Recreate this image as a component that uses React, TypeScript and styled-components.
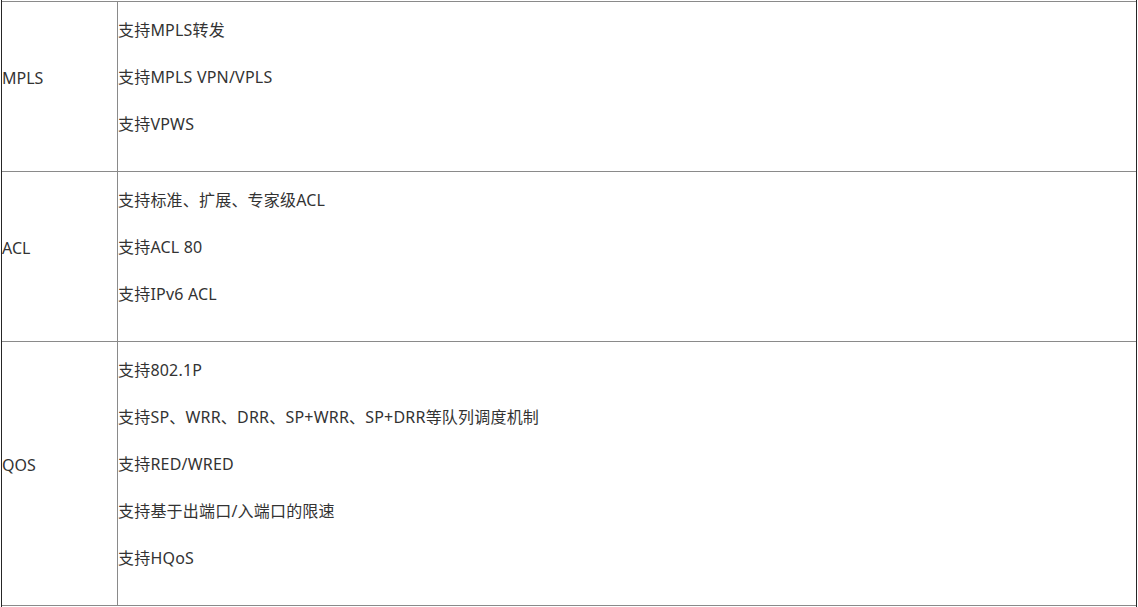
import React from "react";
import styled, { createGlobalStyle } from "styled-components";

const Global = createGlobalStyle`
  html, body { margin: 0; padding: 0; background: #fff; }
  body { font-family: "Noto Sans", "Noto Sans CJK SC", sans-serif; }
`;

const Frame = styled.div`
  box-sizing: border-box;
  margin-left: 1px;
  width: 1136px;
  height: 607px;
  padding-top: 1px;
  border-left: 1px solid #262626;
  border-right: 1px solid #262626;
  overflow: hidden;
`;

const Table = styled.div`
  border-top: 1px solid #8a8a8a;
`;

const Row = styled.div`
  display: grid;
  grid-template-columns: 116px 1fr;
  border-bottom: 1px solid #8a8a8a;
`;

const Label = styled.div`
  display: flex;
  align-items: center;
  padding-bottom: 18px;
  border-right: 1px solid #8a8a8a;
  font-size: 16px;
  color: #333;
`;

const Items = styled.div`
  display: flex;
  flex-direction: column;
  padding-bottom: 28px;
`;

const Line = styled.div`
  margin: 16px 0 7px;
  line-height: 24px;
  font-size: 16px;
  color: #333;
  white-space: nowrap;
  letter-spacing: 0.2px;
`;

const rows: { label: string; items: string[] }[] = [
  { label: "MPLS", items: ["支持MPLS转发", "支持MPLS VPN/VPLS", "支持VPWS"] },
  { label: "ACL", items: ["支持标准、扩展、专家级ACL", "支持ACL 80", "支持IPv6 ACL"] },
  {
    label: "QOS",
    items: [
      "支持802.1P",
      "支持SP、WRR、DRR、SP+WRR、SP+DRR等队列调度机制",
      "支持RED/WRED",
      "支持基于出端口/入端口的限速",
      "支持HQoS",
    ],
  },
];

export default function App() {
  return (
    <>
      <Global />
      <Frame>
        <Table>
          {rows.map((r) => (
            <Row key={r.label}>
              <Label>{r.label}</Label>
              <Items>
                {r.items.map((t) => (
                  <Line key={t}>{t}</Line>
                ))}
              </Items>
            </Row>
          ))}
        </Table>
      </Frame>
    </>
  );
}
